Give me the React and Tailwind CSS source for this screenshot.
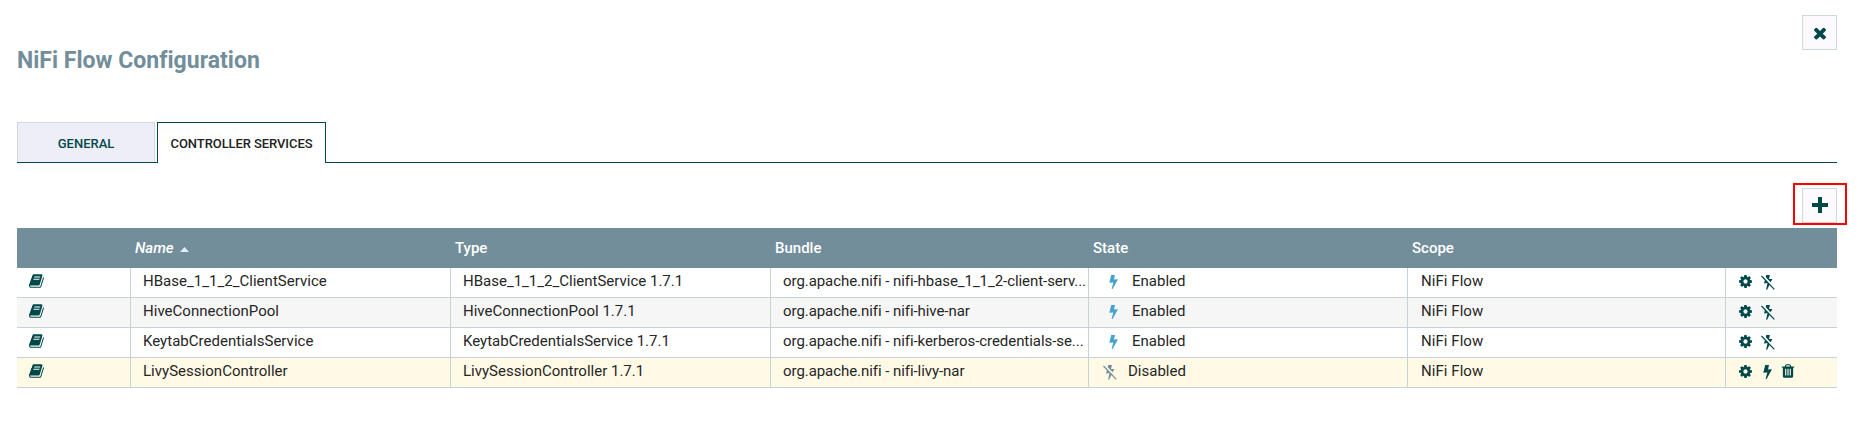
const PATHS = {
  book: "M1639 478q40 57 18 129l-275 906q-19 64-76.5 107.5t-122.5 43.5h-923q-77 0-148.5-53.5t-99.5-131.5q-24-67-2-127 0-4 3-27t4-37q1-8-3-21.5t-3-19.5q2-11 8-21t16.5-23.5 16.5-23.5q23-38 45-91.5t30-91.5q3-10 .5-30t-.5-28q3-11 17-28t17-23q21-36 42-92t25-90q1-9-2.5-32t.5-28q4-13 22-30.5t22-22.5q19-26 42.5-84.5t27.5-96.5q1-8-3-25.5t-2-26.5q2-8 9-18t18-23 17-21q8-12 16.5-30.5t15-35 16-36 19.5-32 26.5-23.5 36-11.5 47.5 5.5l-1 3q38-9 51-9h761q74 0 114 56t18 130l-274 906q-36 119-71.5 153.5t-128.5 34.5h-869q-27 0-38 15-11 16-1 43 24 70 144 70h923q29 0 56-15.5t35-41.5l300-987q7-22 5-57 38 15 59 43zm-1064 2q-4 13 2 22.5t20 9.5h608q13 0 25.5-9.5t16.5-22.5l21-64q4-13-2-22.5t-20-9.5h-608q-13 0-25.5 9.5t-16.5 22.5zm-83 256q-4 13 2 22.5t20 9.5h608q13 0 25.5-9.5t16.5-22.5l21-64q4-13-2-22.5t-20-9.5h-608q-13 0-25.5 9.5t-16.5 22.5z",
  cog: "M1152 896q0-106-75-181t-181-75-181 75-75 181 75 181 181 75 181-75 75-181zm512-109v222q0 12-8 23t-20 13l-185 28q-19 54-39 91 35 50 107 138 10 12 10 25t-9 23q-27 37-99 108t-94 71q-12 0-26-9l-138-108q-44 23-91 38-16 136-29 186-7 28-36 28h-222q-14 0-24.5-8.5t-11.5-21.5l-28-184q-49-16-90-37l-141 107q-10 9-25 9-14 0-25-11-126-114-165-168-7-10-7-23 0-12 8-23 15-21 51-66.5t54-70.5q-27-50-41-99l-183-27q-13-2-21-12.5t-8-23.5v-222q0-12 8-23t19-13l186-28q14-46 39-92-40-57-107-138-10-12-10-24 0-10 9-23 26-36 98.5-107.5t94.5-71.5q13 0 26 10l138 107q44-23 91-38 16-136 29-186 7-28 36-28h222q14 0 24.5 8.5t11.5 21.5l28 184q49 16 90 37l142-107q9-9 24-9 13 0 25 10 129 119 165 170 7 8 7 22 0 12-8 23-15 21-51 66.5t-54 70.5q26 50 41 98l183 28q13 2 21 12.5t8 23.5z",
  trash: "M704 1376v-704q0-14-9-23t-23-9h-64q-14 0-23 9t-9 23v704q0 14 9 23t23 9h64q14 0 23-9t9-23zm256 0v-704q0-14-9-23t-23-9h-64q-14 0-23 9t-9 23v704q0 14 9 23t23 9h64q14 0 23-9t9-23zm256 0v-704q0-14-9-23t-23-9h-64q-14 0-23 9t-9 23v704q0 14 9 23t23 9h64q14 0 23-9t9-23zm-544-992h448l-48-117q-7-9-17-11h-317q-10 2-17 11zm928 32v64q0 14-9 23t-23 9h-96v948q0 83-47 143.5t-113 60.5h-832q-66 0-113-58.5t-47-141.5v-952h-96q-14 0-23-9t-9-23v-64q0-14 9-23t23-9h309l70-167q15-37 54-63t79-26h320q40 0 79 26t54 63l70 167h309q14 0 23 9t9 23z",
  close: "M1490 1322q0 40-28 68l-136 136q-28 28-68 28t-68-28l-294-294-294 294q-28 28-68 28t-68-28l-136-136q-28-28-28-68t28-68l294-294-294-294q-28-28-28-68t28-68l136-136q28-28 68-28t68 28l294 294 294-294q28-28 68-28t68 28l136 136q28 28 28 68t-28 68l-294 294 294 294q28 28 28 68z",
};

function Glyph({ name, className }) {
  return (
    <svg viewBox="0 0 1792 1792" fill="currentColor" className={`shrink-0 ${className}`}>
      <path d={PATHS[name]} />
    </svg>
  );
}

function Bolt({ className }) {
  return (
    <svg viewBox="0 0 9 14" fill="currentColor" className={`h-[14px] w-[9px] shrink-0 ${className}`}>
      <path d="M2.2 0H6L5 4.4L9 4.2L3.6 14H2.6L4.3 7.4L0.3 7.8Z" />
    </svg>
  );
}

function BoltOff({ className }) {
  return (
    <svg viewBox="0 0 14 15" className={`h-[15px] w-[14px] shrink-0 ${className}`}>
      <path fill="currentColor" d="M5.2 0H8.9L8 4L11.4 4L9.6 7.2L4.8 2.2ZM4 4.9L8.7 9.6L6.1 14.8H5.1L6.5 8.1L3 8.4Z" />
      <path d="M0.5 1L13.3 14.3" stroke="currentColor" strokeWidth="1.2" fill="none" />
    </svg>
  );
}

const ROWS = [
  { name: "HBase_1_1_2_ClientService", bundle: "org.apache.nifi - nifi-hbase_1_1_2-client-serv...", enabled: true, bg: "bg-white" },
  { name: "HiveConnectionPool", bundle: "org.apache.nifi - nifi-hive-nar", enabled: true, bg: "bg-[#f6f6f6]" },
  { name: "KeytabCredentialsService", bundle: "org.apache.nifi - nifi-kerberos-credentials-se...", enabled: true, bg: "bg-white" },
  { name: "LivySessionController", bundle: "org.apache.nifi - nifi-livy-nar", enabled: false, bg: "bg-[#fffae5]" },
];

const GRID = "grid grid-cols-[114px_320px_320px_318px_319px_318px_111px]";
const CELL = "flex min-w-0 items-center border-r border-[#c7d2d7] pb-[3px]";

export default function App() {
  return (
    <div className="h-[443px] w-[1860px] bg-white pl-[17px] pr-[23px] pt-[15px] font-['Roboto',sans-serif] text-[#262626]">
      <header className="flex h-[107px] items-start justify-between">
        <h1 className="pt-[30px] text-[23px] leading-8 font-bold tracking-[0.02px] text-[#728e9b]">NiFi Flow Configuration</h1>
        <button className="flex size-[35px] items-center justify-center border border-[#ccdadb] bg-[#fdfafe] text-[#004849]">
          <Glyph name="close" className="size-[18px]" />
        </button>
      </header>

      <nav className="flex h-[41px] text-[13px] font-medium">
        <div className="flex w-[140px] border-b border-[#004849] pr-[2px]">
          <button className="flex-1 border border-b-0 border-[#ccdadb] bg-[#eeeef8] pt-[3px] text-[#004849]">GENERAL</button>
        </div>
        <button className="w-[169px] border border-b-0 border-[#004849] pt-px text-[#222222] tracking-[-0.08px]">CONTROLLER SERVICES</button>
        <div className="flex-1 border-b border-[#004849]" />
      </nav>

      <div className="-mr-[10px] flex h-[65px] justify-end pt-5">
        <div className="flex h-[42px] w-[54px] items-start border-2 border-[#ff0000] pt-[3px] pl-[7px]">
          <button className="flex size-[35px] items-start justify-center border border-[#ccdadb] bg-[#fdfafe] pt-2 text-[#004849]">
            <svg viewBox="0 0 16 16" className="size-4" fill="currentColor">
              <path d="M6 0H10V6H16V10H10V16H6V10H0V6H6Z" />
            </svg>
          </button>
        </div>
      </div>

      <div className={`${GRID} h-10 items-center bg-[#728e9b] text-[15px] font-medium text-white`}>
        <div />
        <div className="flex items-center pl-1">
          <span className="italic">Name</span>
          <svg viewBox="0 0 9 5" className="mt-[3px] ml-[6px] h-[5px] w-[9px]" fill="#e3ebff">
            <path d="M0 5L4.5 0L9 5Z" />
          </svg>
        </div>
        <div className="pl-1">Type</div>
        <div className="pl-1">Bundle</div>
        <div className="pl-1">State</div>
        <div className="pl-1">Scope</div>
        <div />
      </div>

      {ROWS.map((row) => (
        <div key={row.name} className={`${GRID} h-[30px] border-b border-[#c7d2d7] text-[15px] ${row.bg}`}>
          <div className={`${CELL} pl-[12px] text-[#004849]`}>
            <Glyph name="book" className="size-4" />
          </div>
          <div className={`${CELL} pl-3 tracking-[0.02px]`}>{row.name}</div>
          <div className={`${CELL} pl-3`}>{row.name} 1.7.1</div>
          <div className={`${CELL} pl-3 whitespace-nowrap tracking-[-0.06px]`}>{row.bundle}</div>
          <div className={`${CELL} pl-3`}>
            {row.enabled ? (
              <Bolt className="mt-px ml-2 mr-[14px] text-[#44a3cf]" />
            ) : (
              <BoltOff className="mt-[3px] ml-[2px] mr-[11px] text-[#728e9b]" />
            )}
            {row.enabled ? "Enabled" : "Disabled"}
          </div>
          <div className={`${CELL} pl-[13px] tracking-[0.06px]`}>NiFi Flow</div>
          <div className="flex items-center pb-[3px] pl-3 text-[#004849]">
            <Glyph name="cog" className="mt-px size-[15px]" />
            {row.enabled ? (
              <BoltOff className="mt-[3px] ml-2" />
            ) : (
              <>
                <Bolt className="mt-px ml-[10px]" />
                <Glyph name="trash" className="ml-[8px] size-4" />
              </>
            )}
          </div>
        </div>
      ))}
    </div>
  );
}
